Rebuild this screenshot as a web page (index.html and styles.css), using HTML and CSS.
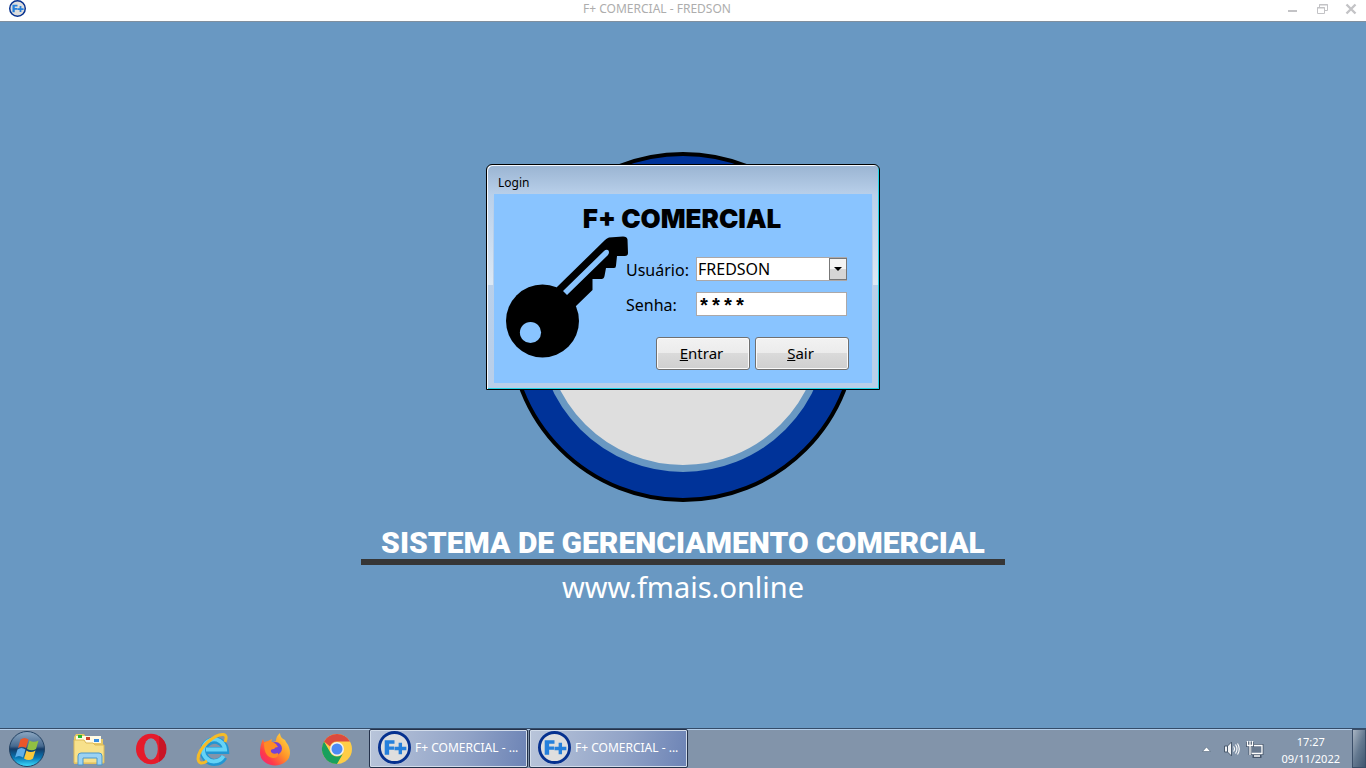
FILE: index.html
```html
<!DOCTYPE html>
<html lang="pt-BR">
<head>
<meta charset="utf-8">
<title>F+ COMERCIAL - FREDSON</title>
<link rel="stylesheet" href="styles.css">
</head>
<body>
<svg class="defs" aria-hidden="true">
  <symbol id="fplus" viewBox="0 0 32 32">
    <circle cx="16" cy="16" r="14.6" fill="#dedede" stroke="#06318f" stroke-width="2.8"/>
    <path d="M6.500 9h9.500v3.400h-5.200v2.600h4.700v3.300h-4.700V23H6.500zM20 11.500h3.300v3.800h4.200v3.300h-4.200v3.900H20v-3.900h-4v-3.300h4z" fill="#2580dc"/>
  </symbol>
</svg>
<header class="titlebar">
  <svg class="app-icon" aria-hidden="true"><use href="#fplus"/></svg>
  <h1 class="app-title">F+ COMERCIAL - FREDSON</h1>
  <div class="window-controls">
    <button type="button" aria-label="Minimizar"><svg viewBox="0 0 12 12"><path d="M1 8h9" stroke="#c3c3c6" stroke-width="2"/></svg></button>
    <button type="button" aria-label="Restaurar"><svg viewBox="0 0 12 12" fill="none" stroke="#c3c3c6"><path d="M3.500 4V1.500h8v6H9M3 2h9M1.500 4.500h7v6h-7zM1 5h8"/></svg></button>
    <button type="button" aria-label="Fechar"><svg viewBox="0 0 12 12"><path d="M1.500 1.500l9 9M10.500 1.500l-9 9" stroke="#c3c3c6" stroke-width="2.400"/></svg></button>
  </div>
</header>
<main class="workspace">
  <div class="emblem"><div class="emblem-core"></div></div>
  <p class="slogan">SISTEMA DE GERENCIAMENTO COMERCIAL</p>
  <p class="site">www.fmais.online</p>

  <section class="dialog" aria-labelledby="login-title">
    <h2 class="dialog-title" id="login-title">Login</h2>
    <form class="login">
      <p class="brand">F+ COMERCIAL</p>
      <svg class="key" viewBox="0 0 124 124" aria-hidden="true">
        <circle cx="36.500" cy="86" r="36.500"/>
        <path d="M51 52L99 5q2-2 4-2.500L117 1.500q4 0 4.500 3L122 18q0 3-3 3h-8l-1 9.500q0 2.500-2 2.500h-8l-1.500 8q-.5 3-3 3h-9v11L69 72 45 66z"/>
        <path d="M57 56L98 16q2-2 4-1 2 2 0 5L61 60z" fill="#89c4ff"/>
        <circle cx="24.500" cy="97.500" r="10.600" fill="#89c4ff"/>
      </svg>
      <div class="fields">
        <label for="user">Usuário:</label>
        <div class="combo">
          <select id="user"><option>FREDSON</option></select>
          <span class="combo-arrow"></span>
        </div>
        <label for="password">Senha:</label>
        <input id="password" type="text" value="****" autocomplete="off">
      </div>
      <div class="actions">
        <button type="button"><u>E</u>ntrar</button>
        <button type="button"><u>S</u>air</button>
      </div>
    </form>
  </section>
</main>
<footer class="taskbar">
  <nav class="launchers" aria-label="Programas">
    <button type="button" aria-label="Iniciar"><svg viewBox="0 0 38 38">
      <defs><linearGradient id="orb" x2="0" y2="1"><stop stop-color="#8ea9c3"/><stop offset=".42" stop-color="#46698f"/><stop offset=".5" stop-color="#143b67"/><stop offset=".75" stop-color="#0877b5"/><stop offset="1" stop-color="#3ee0ff"/></linearGradient></defs>
      <circle cx="19" cy="19" r="17.500" fill="url(#orb)" stroke="#234263"/>
      <path d="M12.500 9.500q4-3 8 0l-2.500 8.500q-4-2.500-8 0z" fill="#e9562a"/><path d="M21.500 10.500q4 2.500 9 0l-2.500 8.500q-4 2.500-9 0z" fill="#91bf43"/>
      <path d="M9.500 19.500q4-3 8 0l-2.500 8q-4-3-8 0z" fill="#5eaee9"/><path d="M18.500 20.500q4 3 9 0l-2.500 8q-4 3-9 0z" fill="#fbc83a"/>
    </svg></button>
    <button type="button" aria-label="Explorador"><svg viewBox="0 0 38 38">
      <path d="M4 7l2-3h8l2 3h3l1-1h7l2 3h4v25H4z" fill="#e6c865"/>
      <path d="M6 6h25v7H6z" fill="#fffbe5"/><path d="M8 5h4v3H8z" fill="#27b52d"/><path d="M16 7h4v3h-4z" fill="#cf4326"/><path d="M24 9h5v3h-5z" fill="#368ce2"/>
      <path d="M4 10h10l2 3h7l2 2h9v18H4z" fill="#f7e18b" stroke="#dcb957"/>
      <path d="M8 35V26q0-3 3-3h18q3 0 3 3v9h-5v-7H13v7z" fill="#9bd2f2" stroke="#4a97cc"/>
    </svg></button>
    <button type="button" aria-label="Opera"><svg viewBox="0 0 38 38">
      <ellipse cx="19" cy="19" rx="15" ry="15.200" fill="#e61b2b"/><path d="M27 6a15 15 0 0 1 0 26z" fill="#c91526"/><ellipse cx="19" cy="19" rx="6.800" ry="10.800" fill="#8294aa"/>
    </svg></button>
    <button type="button" aria-label="Internet Explorer"><svg viewBox="0 0 38 38" fill="none">
      <path d="M30 27A11 11 0 1 1 31.500 20.500H12" stroke="#2196d3" stroke-width="7"/><path d="M29.500 26A11 11 0 1 1 31 19.500H12" stroke="#65d3f6" stroke-width="4"/>
      <path d="M31 12Q34 5 29 4.500C21 4 4 18 4 29q1 7 9 2" stroke="#f5bb27" stroke-width="3"/>
    </svg></button>
    <button type="button" aria-label="Firefox"><svg viewBox="0 0 38 38">
      <defs><linearGradient id="fox" x1="1" x2="0" y2="1"><stop stop-color="#ffe84b"/><stop offset=".45" stop-color="#ff9327"/><stop offset=".75" stop-color="#ff394b"/><stop offset="1" stop-color="#e8238a"/></linearGradient></defs>
      <path d="M7 9l1 3 4-1 4-2-1 4 5-2q0-5 4-8 0 5 5 7l1 2q4 5 4 11a15 12.500 0 0 1-30 0q0-8 3-14z" fill="url(#fox)"/>
      <circle cx="19.500" cy="18.500" r="6.500" fill="#7543d5"/><path d="M8 13q6-4 12 1l2 3q-3 0-4 2-4 0-3 3 2 3 7 1 1 5-5 5-9-1-9-15z" fill="#ff8c25"/>
    </svg></button>
    <button type="button" aria-label="Chrome"><svg viewBox="0 0 38 38">
      <circle cx="19" cy="19" r="15" fill="#ffcd46"/><path d="M6 11.500A15 15 0 0 1 32 11.500H19a7.500 7.500 0 0 0-7 5z" fill="#dc4b3e"/><path d="M6 11.500A15 15 0 0 0 19 34l6.500-11.300a7.500 7.500 0 0 1-13 0z" fill="#19a05d"/>
      <circle cx="19" cy="19" r="7" fill="#f1f1f1"/><circle cx="19" cy="19" r="5.500" fill="#4c8bf5"/>
    </svg></button>
  </nav>
  <button type="button" class="task"><svg aria-hidden="true"><use href="#fplus"/></svg><span>F+ COMERCIAL - ...</span></button>
  <button type="button" class="task"><svg aria-hidden="true"><use href="#fplus"/></svg><span>F+ COMERCIAL - ...</span></button>
  <div class="tray">
    <svg class="tray-up" viewBox="0 0 9 6" aria-hidden="true"><path d="M.5 5.500l4-4.500 4 4.500z" fill="#fff" stroke="#53647b" stroke-width=".6"/></svg>
    <svg class="tray-icon" viewBox="0 0 18 18" fill="none" aria-hidden="true"><path d="M2.500 6h3l4-4v14l-4-4h-3z" fill="#eef1f4" stroke="#49596d"/><path d="M5.500 6v6" stroke="#49596d"/><path d="M11.500 6.500q2 2.500 0 5M13.500 4.500q3 4.500 0 9M15.500 3.500q3.500 5.500 0 11" stroke="#fff" stroke-width="1.100"/></svg>
    <svg class="tray-icon" viewBox="0 0 18 18" fill="none" aria-hidden="true"><path d="M5 5.500h11v8H5zM9 14v3M6.500 16.500h9" stroke="#46566b" stroke-width="3"/><path d="M5 5.500h11v8H5z" fill="#68798f" stroke="#fff" stroke-width="1.300"/><path d="M8 16h6" stroke="#fff" stroke-width="1.500"/><path d="M1.500 2v3.500h5V2M4 2v13" stroke="#46566b" stroke-width="3"/><path d="M1.500 1v4.500h5V1M4 1v14" stroke="#fff" stroke-width="1.300"/></svg>
    <div class="clock"><time>17:27</time><time>09/11/2022</time></div>
    <button type="button" class="show-desktop" aria-label="Mostrar área de trabalho"></button>
  </div>
</footer>
</body>
</html>
```
FILE: styles.css
```css
* { box-sizing: border-box; }
body {
  margin: 0;
  min-height: 100vh;
  display: flex;
  flex-direction: column;
  font: 12px/16px "Noto Sans", "Open Sans", sans-serif;
  background: #6998c2;
}
h1, h2, p { margin: 0; font-weight: 400; }
button { font: inherit; padding: 0; border: 0; background: none; }
svg { display: block; }
.defs { position: absolute; width: 0; height: 0; }

.titlebar {
  height: 22px;
  display: grid;
  grid-template-columns: 1fr auto 1fr;
  align-items: start;
  padding: 0 9px;
  background: #fff;
  border-bottom: 1px solid #808f9e;
}
.app-icon { width: 17px; height: 17px; }
.app-title { font-size: 12px; line-height: 18px; color: #adadad; padding-right: 52px; }
.window-controls { display: flex; justify-content: flex-end; gap: 17px; padding-top: 3px; }
.window-controls svg { width: 12px; height: 12px; }

.workspace {
  position: relative;
  flex: 1;
  display: flex;
  flex-direction: column;
  align-items: center;
  padding-top: 130px;
}
.emblem {
  width: 350px;
  height: 350px;
  display: grid;
  place-items: center;
  border: 4px solid #000;
  border-radius: 50%;
  background: #039;
}
.emblem-core {
  width: 290px;
  height: 290px;
  border: 7px solid #6998c2;
  border-radius: 50%;
  background: #dedede;
}
.slogan {
  margin-top: 25px;
  padding: 0 20px;
  border-bottom: 6px solid #363636;
  font: 900 30px/32px Roboto, sans-serif;
  color: #fff;
  white-space: nowrap;
}
.site { font-size: 29px; line-height: 44px; color: #fff; }

.dialog {
  position: absolute;
  top: 142px;
  left: 50%;
  width: 394px;
  transform: translateX(-50%);
  padding: 0 6px 6px;
  border: 1px solid #000;
  border-radius: 6px 6px 0 0;
  background: linear-gradient(#9ab4d2, #b9d0ea 30px, #b9cfe9 100%);
  box-shadow: inset 1px 1px #f4f9ff, inset -1px -1px #20d2e5;
}
.dialog::before, .dialog::after {
  content: "";
  position: absolute;
  top: 30px;
  width: 5px;
  height: 90px;
  background: linear-gradient(#b9d0ea, #dce8f4);
}
.dialog::before { left: 1px; }
.dialog::after { right: 1px; }
.dialog-title { padding: 9px 0 0 5px; height: 29px; font-size: 12px; line-height: 18px; color: #000; }
.login {
  position: relative;
  z-index: 1;
  display: grid;
  grid-template-columns: 119px 1fr;
  margin: 0 1px;
  padding: 9px 23px 13px 12px;
  background: #89c4ff;
  color: #000;
}
.brand {
  grid-column: 1 / -1;
  padding-left: 9px;
  text-align: center;
  font: 900 26px/32px Inter, sans-serif;
}
.key { grid-row: 2 / 4; width: 124px; height: 124px; }
.fields {
  display: grid;
  grid-template-columns: 70px 1fr;
  gap: 9px 0;
  align-items: center;
  padding: 21px 2px 0 1px;
  font-size: 16px;
  line-height: 24px;
}
.fields label { padding-top: 2px; }
.combo { position: relative; height: 24px; }
.combo select, .fields input {
  display: block;
  width: 100%;
  height: 24px;
  padding: 0 1px;
  appearance: none;
  border: 1px solid #aca8a8;
  border-radius: 0;
  background: #fff;
  font: 16px/22px "Noto Sans", sans-serif;
  color: #000;
}
.combo-arrow {
  position: absolute;
  top: 1px;
  right: 0;
  width: 18px;
  height: 22px;
  display: grid;
  place-items: center;
  border: 1px solid #777;
  background: linear-gradient(#f3f3f3 50%, #d6d6d6 50%);
  pointer-events: none;
}
.combo-arrow::after { content: ""; border: 4px solid transparent; border-top-color: #000; border-bottom: 0; }
.fields input { padding-top: 6px; font: 700 20px/16px "Liberation Mono", monospace; }
.actions { display: grid; grid-template-columns: 94px 94px; justify-content: end; gap: 5px; margin-top: 20px; }
.actions button {
  height: 33px;
  padding: 0 3px 2px 0;
  border: 1px solid #707070;
  border-radius: 3px;
  background: linear-gradient(#f2f2f2, #ebebeb 50%, #dadada 50%, #cfcfcf);
  box-shadow: inset 0 0 0 1px #fafafa;
  font-size: 15px;
  color: #000;
}

.taskbar {
  height: 40px;
  display: flex;
  border-top: 1px solid #344c69;
  background: #8294aa;
  box-shadow: inset 0 1px #b4ceea;
}
.launchers { display: flex; gap: 24px; width: 369px; padding: 0 8px; align-items: center; }
.launchers svg { width: 38px; height: 38px; }
.task {
  display: flex;
  align-items: center;
  gap: 4px;
  width: 159px;
  margin-right: 1px;
  padding: 0 8px 2px;
  border: 1px solid #24324b;
  border-radius: 2px;
  background: linear-gradient(100deg, #b9c5da, #91a3c7 60%, #6c83b5);
  box-shadow: inset 0 0 0 1px #d3ddeb;
  color: #fff;
  white-space: nowrap;
}
.task svg { flex: none; width: 33px; height: 33px; }
.tray { display: flex; align-items: center; margin-left: auto; color: #fff; }
.tray-up { width: 9px; height: 6px; margin-right: 11px; }
.tray-icon { width: 18px; height: 18px; margin-right: 6px; }
.clock { display: grid; gap: 1px; padding: 3px 12px 0 11px; text-align: center; font-size: 11px; }
.show-desktop {
  align-self: stretch;
  width: 14px;
  border: 1px solid #3b4f69;
  background: linear-gradient(110deg, #a9b5c3, #647990 50%, #3f566f);
}
```
